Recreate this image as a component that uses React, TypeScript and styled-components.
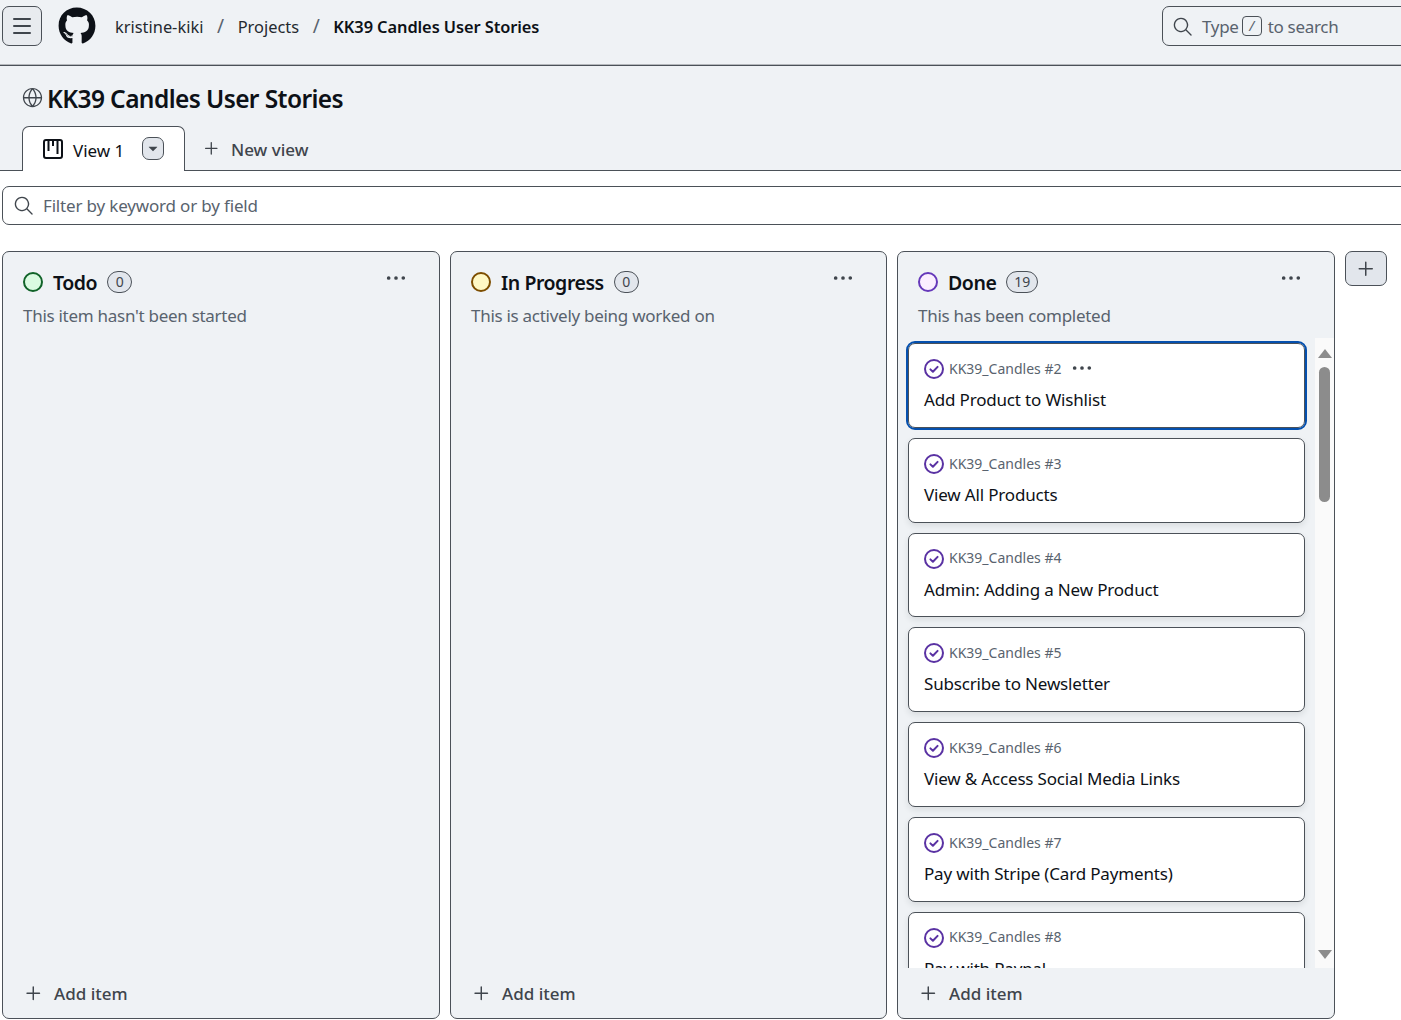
import React from 'react';
import styled, { createGlobalStyle } from 'styled-components';
import { GoGlobe, GoKebabHorizontal, GoPlus, GoSearch, GoTriangleDown } from 'react-icons/go';
import { FaGithub } from 'react-icons/fa';
import { Menu } from 'lucide-react';

const GlobalStyle = createGlobalStyle`
  html, body {
    margin: 0;
    background: #fff;
    overflow: hidden;
    font-family: "Noto Sans", "Open Sans", sans-serif;
  }
  * { box-sizing: border-box; }
`;

const Page = styled.div`
  width: 1401px;
  height: 1020px;
  overflow: hidden;
`;

const TopBar = styled.header`
  height: 66px;
  background: #eff2f5;
  border-bottom: 1px solid #4b5158;
  box-shadow: inset 0 -1px 0 #b5b8bc;
  display: flex;
  align-items: center;
  padding: 0 0 13px 2px;
  white-space: nowrap;
`;

const MenuButton = styled.button`
  width: 40px;
  height: 40px;
  padding: 0;
  margin-right: 16px;
  border: 1px solid #4b5158;
  border-radius: 7px;
  background: #e8ebef;
  color: #3f454c;
  display: flex;
  align-items: center;
  justify-content: center;
`;

const Crumbs = styled.nav`
  display: flex;
  align-items: center;
  margin-left: 19px;
  font-size: 16.4px;
  color: #24292f;
`;

const Slash = styled.span`
  margin: 0 13.6px;
  color: #59636e;
  font-size: 19px;
`;

const CurrentCrumb = styled.span`
  color: #0d1117;
  font-weight: 600;
  letter-spacing: -0.08px;
`;

const SearchBox = styled.div`
  margin-left: auto;
  width: 260px;
  flex: none;
  margin-right: -21px;
  height: 40px;
  border: 1px solid #4b5158;
  border-radius: 7px 0 0 7px;
  display: flex;
  align-items: center;
  padding-left: 9px;
  font-size: 17px;
  letter-spacing: -0.3px;
  color: #59636e;
`;

const SlashKey = styled.kbd`
  width: 20px;
  height: 20px;
  margin: 0 6px 0 3px;
  border: 1px solid #4b5158;
  border-radius: 4px;
  font: inherit;
  font-size: 14px;
  line-height: 18px;
  text-align: center;
  font-style: italic;
`;

const SearchLabel = styled.span`
  margin-left: 9px;
`;

const TitleArea = styled.section`
  height: 105px;
  background: #eff2f5;
  border-bottom: 1px solid #4b5158;
  display: flex;
  flex-direction: column;
  padding: 17px 0 0 22px;
`;

const TitleRow = styled.h1`
  margin: 0;
  height: 43px;
  display: flex;
  align-items: flex-start;
  gap: 4px;
  font-size: 24.5px;
  letter-spacing: -0.6px;
  line-height: 32px;
  font-weight: 600;
  color: #0d1117;
  svg { color: #3f454c; margin-top: 4px; }
`;

const Tabs = styled.div`
  display: flex;
  align-items: flex-start;
`;

const ActiveTab = styled.div`
  width: 163px;
  height: 45px;
  margin-bottom: -1px;
  background: #fff;
  border: 1px solid #4b5158;
  border-bottom: none;
  border-radius: 7px 7px 0 0;
  display: flex;
  align-items: center;
  padding-left: 20px;
  font-size: 17px;
  color: #0d1117;
`;

const TabName = styled.span`
  margin: 2px 0 0 10px;
  width: 69px;
`;

const TabCaret = styled.span`
  width: 22px;
  height: 23px;
  margin-top: -1px;
  border: 1px solid #4b5158;
  border-radius: 7px;
  background: #e2e6ec;
  color: #3f454c;
  display: flex;
  align-items: center;
  justify-content: center;
`;

const NewView = styled.div`
  height: 44px;
  display: flex;
  align-items: center;
  gap: 9px;
  padding-left: 16px;
  font-size: 17px;
  font-weight: 500;
  color: #3f454c;
`;

const NewViewLabel = styled.span`
  margin-top: 3px;
`;

const FilterBar = styled.div`
  height: 39px;
  margin: 15px -20px 0 2px;
  border: 1px solid #4b5158;
  border-radius: 7px;
  display: flex;
  align-items: center;
  gap: 9px;
  padding-left: 10px;
  font-size: 17px;
  letter-spacing: -0.17px;
  color: #59636e;
  svg { color: #3f454c; }
`;

const Board = styled.main`
  display: flex;
  gap: 10px;
  margin: 26px 0 0 2px;
  align-items: flex-start;
`;

const Column = styled.section<{ $width: number }>`
  width: ${(p) => p.$width}px;
  height: 768px;
  flex: none;
  background: #eff2f5;
  border: 1px solid #4b5158;
  border-radius: 7px;
  display: flex;
  flex-direction: column;
  overflow: hidden;
`;

const ColumnHead = styled.div`
  height: 86px;
  flex: none;
  padding: 17px 20px 0 20px;
`;

const ColumnTitleRow = styled.div`
  height: 26px;
  display: flex;
  align-items: center;
`;

const StatusDot = styled.span<{ $ring: string; $fill: string }>`
  width: 20px;
  height: 20px;
  border-radius: 50%;
  border: 2px solid ${(p) => p.$ring};
  background: ${(p) => p.$fill};
  margin-right: 10px;
  flex: none;
`;

const ColumnName = styled.span`
  font-size: 19.5px;
  letter-spacing: -0.45px;
  font-weight: 600;
  color: #0d1117;
`;

const CountBadge = styled.span`
  height: 22px;
  min-width: 25px;
  margin: 0 0 0 10px;
  padding: 0 7px;
  border: 1px solid #4b5158;
  border-radius: 11px;
  background: #e2e6ec;
  color: #3f454c;
  font-size: 14px;
  line-height: 20px;
  text-align: center;
`;

const ColumnMenu = styled.span`
  margin: -8px 12px 0 auto;
  color: #3f454c;
  display: flex;
`;

const ColumnHint = styled.p`
  margin: 9px 0 0;
  font-size: 17px;
  letter-spacing: -0.28px;
  line-height: 24px;
  color: #59636e;
`;

const ColumnBody = styled.div`
  flex: 1;
  min-height: 0;
  display: flex;
  overflow: hidden;
`;

const CardList = styled.div`
  flex: 1;
  min-width: 0;
  padding: 5px 10px 0 10px;
  display: flex;
  flex-direction: column;
  gap: 10px;
`;

const Card = styled.article<{ $focused?: boolean }>`
  height: 84.75px;
  flex: none;
  background: #fff;
  border: 1px solid #4b5158;
  border-radius: 7px;
  padding: 11px 15px 0;
  box-shadow: 0 3px 6px rgba(31, 35, 40, 0.1);
  ${(p) => p.$focused && 'outline: 2px solid #0550ae; outline-offset: 0; box-shadow: none;'}
`;

const CardMeta = styled.div`
  height: 28px;
  display: flex;
  align-items: center;
  font-size: 14px;
  color: #59636e;
`;

const CardRepo = styled.span`
  margin-left: 5px;
  margin-top: -1.5px;
`;

const CardKebab = styled.span`
  margin: -2px 0 0 10px;
  color: #3f454c;
  display: flex;
`;

const CardTitle = styled.div`
  margin-top: 4px;
  font-size: 17px;
  letter-spacing: -0.17px;
  line-height: 26px;
  color: #0d1117;
  white-space: nowrap;
`;

const ScrollTrack = styled.div`
  width: 19px;
  flex: none;
  background: #fafafa;
  display: flex;
  flex-direction: column;
  align-items: center;
  padding-top: 11px;
`;

const ScrollUp = styled.span`
  width: 0;
  height: 0;
  border-left: 7px solid transparent;
  border-right: 7px solid transparent;
  border-bottom: 9px solid #8c8c8c;
`;

const ScrollThumb = styled.span`
  width: 11px;
  height: 135px;
  margin-top: 9px;
  border-radius: 6px;
  background: #8c8c8c;
`;

const ScrollDown = styled.span`
  width: 0;
  height: 0;
  margin-top: auto;
  margin-bottom: 9px;
  border-left: 7px solid transparent;
  border-right: 7px solid transparent;
  border-top: 9px solid #8c8c8c;
`;

const AddItem = styled.div`
  height: 50px;
  flex: none;
  display: flex;
  align-items: center;
  gap: 9px;
  padding: 0 0 0 19px;
  font-size: 17px;
  font-weight: 500;
  color: #3f454c;
`;

const AddColumn = styled.button`
  width: 42px;
  height: 35px;
  padding: 0;
  border: 1px solid #4b5158;
  border-radius: 7px;
  background: #e2e6ec;
  color: #3f454c;
  display: flex;
  align-items: center;
  justify-content: center;
`;

const BoardIcon = () => (
  <svg width="20" height="20" viewBox="0 0 20 20" fill="none" stroke="#0d1117" strokeWidth="2">
    <rect x="1" y="1" width="18" height="18" rx="2" />
    <path d="M5.5 2v10M10 2v5M14.5 2v13" strokeWidth="2" />
  </svg>
);

const ClosedIcon = () => (
  <svg width="20" height="20" viewBox="0 0 20 20" fill="none" stroke="#5a32a3" strokeWidth="2">
    <circle cx="10" cy="10" r="9" />
    <path d="M6.4 10.4l2.5 2.4 4.7-4.9" strokeLinecap="round" strokeLinejoin="round" />
  </svg>
);

const doneCards = [
  { num: 2, title: 'Add Product to Wishlist' },
  { num: 3, title: 'View All Products' },
  { num: 4, title: 'Admin: Adding a New Product' },
  { num: 5, title: 'Subscribe to Newsletter' },
  { num: 6, title: 'View & Access Social Media Links' },
  { num: 7, title: 'Pay with Stripe (Card Payments)' },
  { num: 8, title: 'Pay with Paypal' },
];

const columns = [
  { name: 'Todo', count: 0, ring: '#116329', fill: '#dafbe1', hint: "This item hasn't been started", width: 438 },
  { name: 'In Progress', count: 0, ring: '#7d4e00', fill: '#fff8c5', hint: 'This is actively being worked on', width: 437 },
  { name: 'Done', count: 19, ring: '#6639ba', fill: '#fbefff', hint: 'This has been completed', width: 438 },
];

export default function App() {
  return (
    <Page>
      <GlobalStyle />
      <TopBar>
        <MenuButton><Menu size={24} strokeWidth={2} /></MenuButton>
        <FaGithub size={38} color="#0d1117" />
        <Crumbs>
          <span>kristine-kiki</span>
          <Slash>/</Slash>
          <span>Projects</span>
          <Slash>/</Slash>
          <CurrentCrumb>KK39 Candles User Stories</CurrentCrumb>
        </Crumbs>
        <SearchBox>
          <GoSearch size={21} color="#3f454c" />
          <SearchLabel>Type</SearchLabel>
          <SlashKey>/</SlashKey>
          <span>to search</span>
        </SearchBox>
      </TopBar>
      <TitleArea>
        <TitleRow><GoGlobe size={21} />KK39 Candles User Stories</TitleRow>
        <Tabs>
          <ActiveTab>
            <BoardIcon />
            <TabName>View 1</TabName>
            <TabCaret><GoTriangleDown size={16} /></TabCaret>
          </ActiveTab>
          <NewView><GoPlus size={21} /><NewViewLabel>New view</NewViewLabel></NewView>
        </Tabs>
      </TitleArea>
      <FilterBar><GoSearch size={21} />Filter by keyword or by field</FilterBar>
      <Board>
        {columns.map((col) => (
          <Column key={col.name} $width={col.width}>
            <ColumnHead>
              <ColumnTitleRow>
                <StatusDot $ring={col.ring} $fill={col.fill} />
                <ColumnName>{col.name}</ColumnName>
                <CountBadge>{col.count}</CountBadge>
                <ColumnMenu><GoKebabHorizontal size={22} /></ColumnMenu>
              </ColumnTitleRow>
              <ColumnHint>{col.hint}</ColumnHint>
            </ColumnHead>
            <ColumnBody>
              {col.name === 'Done' && (
                <>
                  <CardList>
                    {doneCards.map((card, i) => (
                      <Card key={card.num} $focused={i === 0}>
                        <CardMeta>
                          <ClosedIcon />
                          <CardRepo>KK39_Candles #{card.num}</CardRepo>
                          {i === 0 && <CardKebab><GoKebabHorizontal size={22} /></CardKebab>}
                        </CardMeta>
                        <CardTitle>{card.title}</CardTitle>
                      </Card>
                    ))}
                  </CardList>
                  <ScrollTrack>
                    <ScrollUp />
                    <ScrollThumb />
                    <ScrollDown />
                  </ScrollTrack>
                </>
              )}
            </ColumnBody>
            <AddItem><GoPlus size={23} />Add item</AddItem>
          </Column>
        ))}
        <AddColumn><GoPlus size={24} /></AddColumn>
      </Board>
    </Page>
  );
}
